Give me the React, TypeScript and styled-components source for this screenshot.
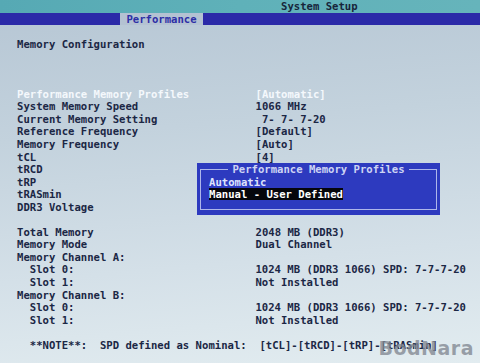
import React from "react";
import styled, { createGlobalStyle } from "styled-components";

const ROW = 12.55;
const CH = 6.4;

const Global = createGlobalStyle`
  html, body { margin: 0; padding: 0; background: #c4d3de; }
  #root { width: 480px; height: 363px; overflow: hidden; }
`;

const Screen = styled.div`
  position: relative;
  width: 480px;
  height: 363px;
  overflow: hidden;
  background: linear-gradient(175deg, #b6c6d4 0%, #c3d2dd 35%, #d4e0e8 70%, #e2ecf0 100%);
  font-family: "DejaVu Sans Mono", "Liberation Mono", monospace;
  font-weight: bold;
  font-size: 10.6px;
  line-height: ${ROW}px;
  color: #1b2745;
  white-space: pre;
`;

const TitleBar = styled.div`
  height: ${ROW}px;
  background: linear-gradient(90deg, #56a9b4 0%, #5fb1b9 50%, #66b4bb 100%);
  padding-left: 281px;
  color: #17253a;
`;

const TabBar = styled.div`
  height: ${ROW}px;
  background: #2b2aa8;
  display: flex;
  padding-left: 120px;
`;

const Tab = styled.div`
  width: 83px;
  background: #b4c2d2;
  color: #2d2fa6;
  text-align: center;
`;

const Content = styled.div`
  padding-top: ${ROW}px;
  padding-left: 17px;
`;

const Row = styled.div<{ $light?: boolean; $indent?: number }>`
  display: flex;
  height: ${ROW}px;
  padding-left: ${(p) => (p.$indent ?? 0) * CH}px;
  color: ${(p) => (p.$light ? "#f4f8fc" : "inherit")};
`;

const Label = styled.span<{ $indent?: number }>`
  width: ${(p) => 238.5 - (p.$indent ?? 0) * CH}px;
  flex: none;
`;

const Value = styled.span``;

const Blank = styled.div<{ $n?: number }>`
  height: ${(p) => (p.$n ?? 1) * ROW}px;
`;

const Popup = styled.div`
  position: absolute;
  left: 197px;
  top: 163px;
  width: 243px;
  height: 52px;
  background: #2d3abf;
  color: #d6dcf6;
`;

const Frame = styled.div`
  position: absolute;
  left: 3px;
  right: 3px;
  top: 6px;
  bottom: 5px;
  border: 1px solid #aeb6ea;
`;

const PopupTitle = styled.div`
  height: ${ROW}px;
  text-align: center;
  position: relative;
  color: #cdd4f4;
`;

const TitleText = styled.span`
  background: #2d3abf;
  padding: 0 4px;
`;

const PopupList = styled.div`
  padding-left: 12px;
`;

const Option = styled.div<{ $sel?: boolean }>`
  height: ${ROW}px;
  span {
    background: ${(p) => (p.$sel ? "#05060c" : "transparent")};
    color: ${(p) => (p.$sel ? "#ffffff" : "#dfe3fb")};
  }
`;

const Watermark = styled.div`
  position: absolute;
  right: 6px;
  bottom: 5px;
  font-family: "DejaVu Sans", sans-serif;
  font-weight: bold;
  font-size: 19px;
  line-height: 20px;
  letter-spacing: 0.5px;
  color: rgba(130, 136, 146, 0.78);
`;

type Item = { label: string; value?: string; light?: boolean; indent?: number };

const settings: Item[] = [
  { label: "Performance Memory Profiles", value: "[Automatic]", light: true },
  { label: "System Memory Speed", value: "1066 MHz" },
  { label: "Current Memory Setting", value: " 7- 7- 7-20" },
  { label: "Reference Frequency", value: "[Default]" },
  { label: "Memory Frequency", value: "[Auto]" },
  { label: "tCL", value: "[4]" },
  { label: "tRCD" },
  { label: "tRP" },
  { label: "tRASmin" },
  { label: "DDR3 Voltage" },
];

const info: Item[] = [
  { label: "Total Memory", value: "2048 MB (DDR3)" },
  { label: "Memory Mode", value: "Dual Channel" },
  { label: "Memory Channel A:" },
  { label: "Slot 0:", value: "1024 MB (DDR3 1066) SPD: 7-7-7-20", indent: 2 },
  { label: "Slot 1:", value: "Not Installed", indent: 2 },
  { label: "Memory Channel B:" },
  { label: "Slot 0:", value: "1024 MB (DDR3 1066) SPD: 7-7-7-20", indent: 2 },
  { label: "Slot 1:", value: "Not Installed", indent: 2 },
];

const renderRow = (it: Item, i: number) => (
  <Row key={i} $light={it.light} $indent={it.indent}>
    <Label $indent={it.indent}>{it.label}</Label>
    {it.value !== undefined && <Value>{it.value}</Value>}
  </Row>
);

export default function App() {
  return (
    <Screen>
      <Global />
      <TitleBar>System Setup</TitleBar>
      <TabBar>
        <Tab>Performance</Tab>
      </TabBar>
      <Content>
        <Row>Memory Configuration</Row>
        <Blank $n={3} />
        {settings.map(renderRow)}
        <Blank />
        {info.map(renderRow)}
        <Blank />
        <Row $indent={2}>{"**NOTE**:  SPD defined as Nominal:  [tCL]-[tRCD]-[tRP]-[tRASmin]"}</Row>
      </Content>
      <Popup>
        <Frame />
        <PopupTitle>
          <TitleText>Performance Memory Profiles</TitleText>
        </PopupTitle>
        <PopupList>
          <Option>
            <span>Automatic</span>
          </Option>
          <Option $sel>
            <span>Manual - User Defined</span>
          </Option>
        </PopupList>
      </Popup>
      <Watermark>BodNara</Watermark>
    </Screen>
  );
}
